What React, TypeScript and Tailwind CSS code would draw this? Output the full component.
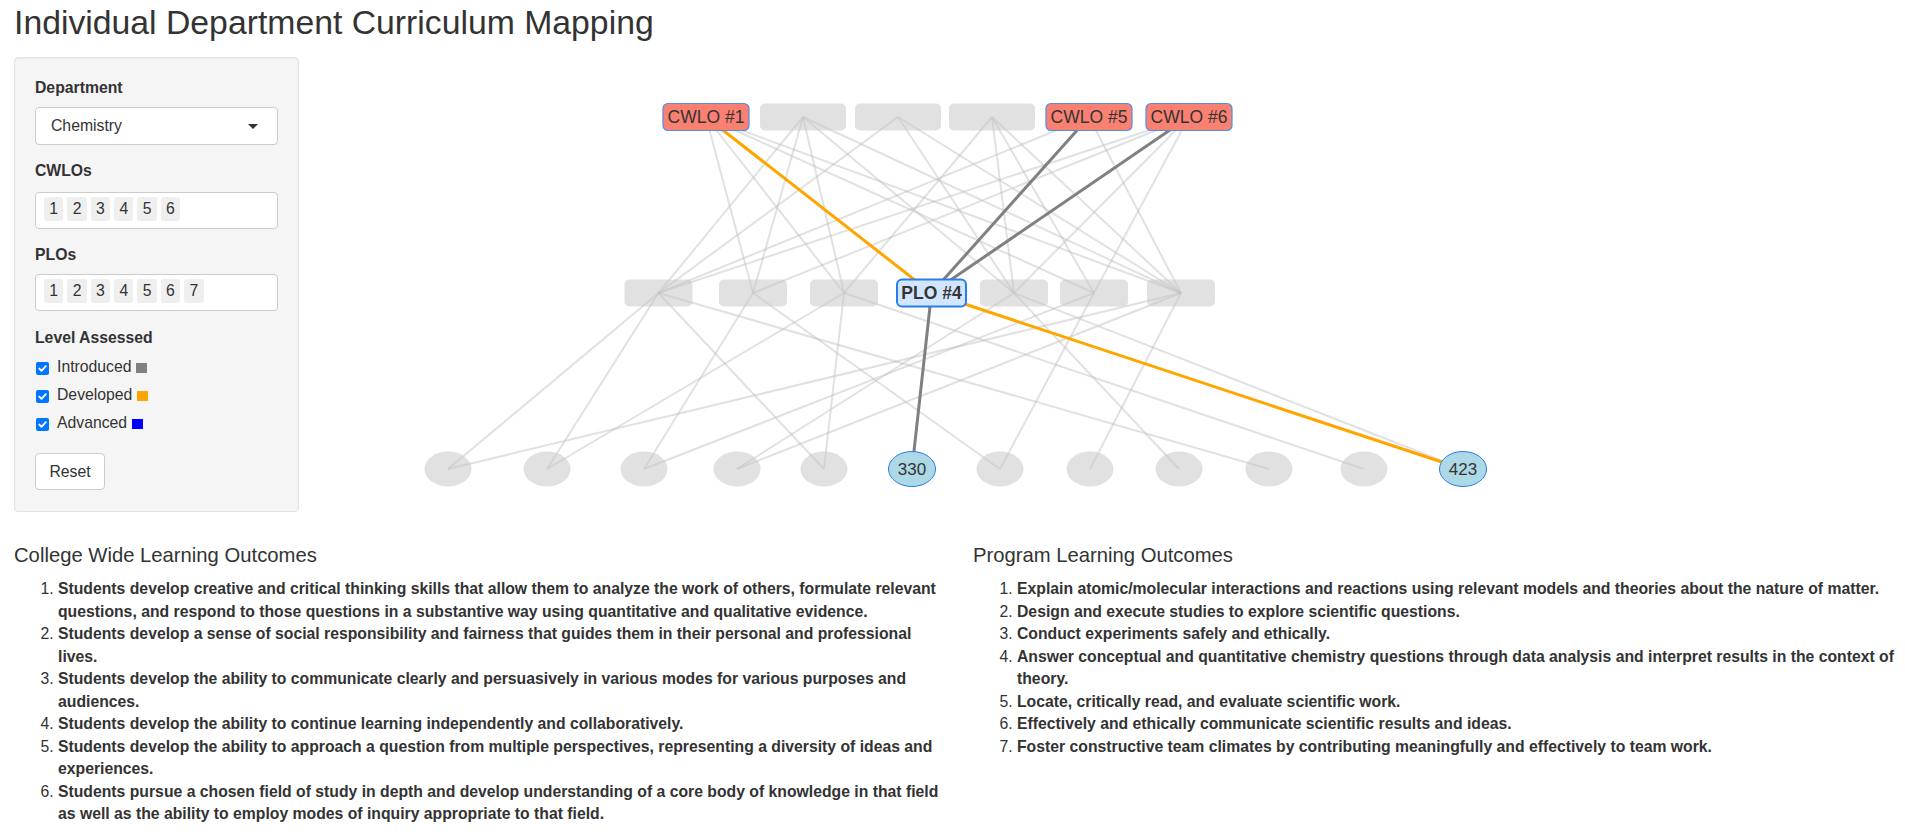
import React from 'react';

// node centres, measured in page pixels
const CWLO_X = [707, 804, 899, 993, 1090, 1190];
const PLO_X = [659.5, 754, 845, 932.5, 1015, 1095, 1182];
const COURSE_X = [449, 548, 645, 738, 825, 913, 1001, 1091, 1180, 1270, 1365, 1464];
const OX = 300;
const OY = 57;
const Y_CWLO = 117 - OY;
const Y_PLO = 293 - OY;
const Y_COURSE = 469 - OY;

// faded mappings (1-based)
const CWLO_PLO: [number, number][] = [
  [1, 2], [1, 3], [1, 6], [1, 7],
  [2, 1], [2, 2], [2, 3], [2, 5], [2, 7],
  [3, 1], [3, 5], [3, 7],
  [4, 3], [4, 5], [4, 6], [4, 7],
  [5, 1], [5, 7],
  [6, 1], [6, 2], [6, 5], [6, 6],
];

const PLO_COURSE: [number, number][] = [
  [1, 1], [1, 2], [1, 5], [1, 10],
  [2, 3], [2, 7],
  [3, 2], [3, 5], [3, 11],
  [5, 4], [5, 9], [5, 12],
  [6, 3], [6, 7],
  [7, 1], [7, 4], [7, 8],
];

const cx = (x: number) => x - OX;

const CWLO_ON: Record<number, string> = { 1: 'CWLO #1', 5: 'CWLO #5', 6: 'CWLO #6' };
const COURSE_ON: Record<number, string> = { 6: '330', 12: '423' };

const cwlos = [
  'Students develop creative and critical thinking skills that allow them to analyze the work of others, formulate relevant questions, and respond to those questions in a substantive way using quantitative and qualitative evidence.',
  'Students develop a sense of social responsibility and fairness that guides them in their personal and professional lives.',
  'Students develop the ability to communicate clearly and persuasively in various modes for various purposes and audiences.',
  'Students develop the ability to continue learning independently and collaboratively.',
  'Students develop the ability to approach a question from multiple perspectives, representing a diversity of ideas and experiences.',
  'Students pursue a chosen field of study in depth and develop understanding of a core body of knowledge in that field as well as the ability to employ modes of inquiry appropriate to that field.',
];

const plos = [
  'Explain atomic/molecular interactions and reactions using relevant models and theories about the nature of matter.',
  'Design and execute studies to explore scientific questions.',
  'Conduct experiments safely and ethically.',
  'Answer conceptual and quantitative chemistry questions through data analysis and interpret results in the context of theory.',
  'Locate, critically read, and evaluate scientific work.',
  'Effectively and ethically communicate scientific results and ideas.',
  'Foster constructive team climates by contributing meaningfully and effectively to team work.',
];

function Chips({ n }: { n: number }) {
  return (
    <div className="mt-[10px] h-[37px] rounded-[4px] border border-[#cccccc] bg-white pl-[8px] pt-[4px] flex gap-[4px] items-start">
      {Array.from({ length: n }, (_, i) => (
        <span key={i} className="h-[24px] px-[5.3px] bg-[#efefef] rounded-[3px] leading-[24px] text-[#333]">
          {i + 1}
        </span>
      ))}
    </div>
  );
}

function Check({ label, color }: { label: string; color: string }) {
  return (
    <div className="h-[22px] flex items-center">
      <span className="ml-[1px] mt-[2px] w-[13px] h-[13px] rounded-[2px] bg-[#0075ff] flex items-center justify-center">
        <svg width="11" height="11" viewBox="0 0 11 11">
          <path d="M2.3 5.6 L4.5 7.8 L8.8 3.2" stroke="white" strokeWidth="1.9" fill="none" strokeLinecap="round" strokeLinejoin="round" />
        </svg>
      </span>
      <span className="ml-[8px] leading-[22px]">{label}</span>
      <span className={`ml-[5px] mt-[1px] w-[11px] h-[10px] ${color}`} />
    </div>
  );
}

function Network() {
  return (
    <svg width="1591" height="455" viewBox="0 0 1591 455" className="block">
      {CWLO_PLO.map(([c, p], i) => (
        <line key={`a${i}`} x1={cx(CWLO_X[c - 1])} y1={Y_CWLO} x2={cx(PLO_X[p - 1])} y2={Y_PLO}
          stroke="#bdbdbd" strokeOpacity="0.45" strokeWidth="2" />
      ))}
      {PLO_COURSE.map(([p, k], i) => (
        <line key={`b${i}`} x1={cx(PLO_X[p - 1])} y1={Y_PLO} x2={cx(COURSE_X[k - 1])} y2={Y_COURSE}
          stroke="#bdbdbd" strokeOpacity="0.45" strokeWidth="2" />
      ))}

      {/* selected PLO #4 paths */}
      <line x1={cx(CWLO_X[0])} y1={Y_CWLO} x2={cx(PLO_X[3])} y2={Y_PLO} stroke="#ffa500" strokeWidth="3" />
      <line x1={cx(CWLO_X[4])} y1={Y_CWLO} x2={cx(PLO_X[3])} y2={Y_PLO} stroke="#808080" strokeWidth="3" />
      <line x1={cx(CWLO_X[5])} y1={Y_CWLO} x2={cx(PLO_X[3])} y2={Y_PLO} stroke="#808080" strokeWidth="3" />
      <line x1={cx(PLO_X[3])} y1={Y_PLO} x2={cx(COURSE_X[5])} y2={Y_COURSE} stroke="#808080" strokeWidth="3" />
      <line x1={cx(PLO_X[3])} y1={Y_PLO} x2={cx(COURSE_X[11])} y2={Y_COURSE} stroke="#ffa500" strokeWidth="3" />

      {CWLO_X.map((x, i) => {
        const label = CWLO_ON[i + 1];
        return label ? (
          <g key={`c${i}`}>
            <rect x={cx(x) - 43} y={Y_CWLO - 13.5} width="86" height="27" rx="5" fill="#fa8072" stroke="#4d8fea" strokeWidth="1.2" />
            <text x={cx(x)} y={Y_CWLO + 6} textAnchor="middle" fontSize="17.5" fill="#343434"
              fontFamily="'Liberation Sans', Arial, sans-serif">{label}</text>
          </g>
        ) : (
          <rect key={`c${i}`} x={cx(x) - 43} y={Y_CWLO - 13.5} width="86" height="27" rx="5" fill="#c8c8c8" fillOpacity="0.55" />
        );
      })}

      {PLO_X.map((x, i) =>
        i === 3 ? (
          <g key={`p${i}`}>
            <rect x={cx(x) - 34.5} y={Y_PLO - 13.5} width="69" height="27" rx="5" fill="#d2e5ff" stroke="#2b7ce9" strokeWidth="2" />
            <text x={cx(x)} y={Y_PLO + 6} textAnchor="middle" fontSize="17.5" fontWeight="bold" fill="#343434"
              fontFamily="'Liberation Sans', Arial, sans-serif">PLO #4</text>
          </g>
        ) : (
          <rect key={`p${i}`} x={cx(x) - 34} y={Y_PLO - 13.5} width="68" height="27" rx="5" fill="#c8c8c8" fillOpacity="0.55" />
        )
      )}

      {COURSE_X.map((x, i) => {
        const label = COURSE_ON[i + 1];
        return label ? (
          <g key={`k${i}`}>
            <ellipse cx={cx(x)} cy={Y_COURSE} rx="23.5" ry="17.5" fill="#add8e6" stroke="#2b7ce9" strokeWidth="1" />
            <text x={cx(x)} y={Y_COURSE + 6} textAnchor="middle" fontSize="17" fill="#343434"
              fontFamily="'Liberation Sans', Arial, sans-serif">{label}</text>
          </g>
        ) : (
          <ellipse key={`k${i}`} cx={cx(x)} cy={Y_COURSE} rx="23.5" ry="17.5" fill="#c8c8c8" fillOpacity="0.55" />
        );
      })}
    </svg>
  );
}

export default function App() {
  return (
    <div className="min-h-screen bg-white text-[#333] text-[15.75px] font-['Liberation_Sans',Arial,sans-serif] pt-[4px] pl-[14px]">
      <h2 className="h-[37px] text-[33.75px] leading-[37px] font-normal">Individual Department Curriculum Mapping</h2>

      <div className="mt-[16px] flex">
        {/* sidebar */}
        <div className="w-[285px] h-[455px] shrink-0 rounded-[4px] border border-[#e3e3e3] bg-[#f5f5f5] pt-[19px] px-[20px] shadow-[inset_0_1px_1px_rgba(0,0,0,0.05)]">
          <div className="h-[22px] leading-[22px] font-bold">Department</div>
          <div className="mt-[8px] h-[38px] rounded-[4px] border border-[#cccccc] bg-white pl-[15px] pr-[19px] flex items-center justify-between">
            <span className="leading-[22px]">Chemistry</span>
            <span className="w-0 h-0 border-x-[5px] border-x-transparent border-t-[5px] border-t-[#333]" />
          </div>

          <div className="mt-[15px] h-[22px] leading-[22px] font-bold">CWLOs</div>
          <Chips n={6} />

          <div className="mt-[15px] h-[22px] leading-[22px] font-bold">PLOs</div>
          <div className="-mt-[2px]">
            <Chips n={7} />
          </div>

          <div className="mt-[16px] h-[22px] leading-[22px] font-bold">Level Assessed</div>
          <div className="mt-[7px] flex flex-col gap-[6px]">
            <Check label="Introduced" color="bg-[#808080]" />
            <Check label="Developed" color="bg-[#ffa500]" />
            <Check label="Advanced" color="bg-[#0000ff]" />
          </div>

          <button className="mt-[19px] w-[70px] h-[37px] rounded-[4px] border border-[#cccccc] bg-white text-[#333]">
            Reset
          </button>
        </div>

        {/* network */}
        <Network />
      </div>

      {/* outcome lists */}
      <div className="mt-[32px] flex">
        <div className="w-[932px]">
          <h4 className="text-[20.25px] leading-[22px] font-normal">College Wide Learning Outcomes</h4>
          <ol className="mt-[12px] list-decimal pl-[44px] leading-[22.5px]">
            {cwlos.map((t) => (
              <li key={t}><b>{t}</b></li>
            ))}
          </ol>
        </div>
        <div className="ml-[27px] w-[930px]">
          <h4 className="text-[20.25px] leading-[22px] font-normal">Program Learning Outcomes</h4>
          <ol className="mt-[12px] list-decimal pl-[44px] leading-[22.5px]">
            {plos.map((t) => (
              <li key={t}><b>{t}</b></li>
            ))}
          </ol>
        </div>
      </div>
    </div>
  );
}
